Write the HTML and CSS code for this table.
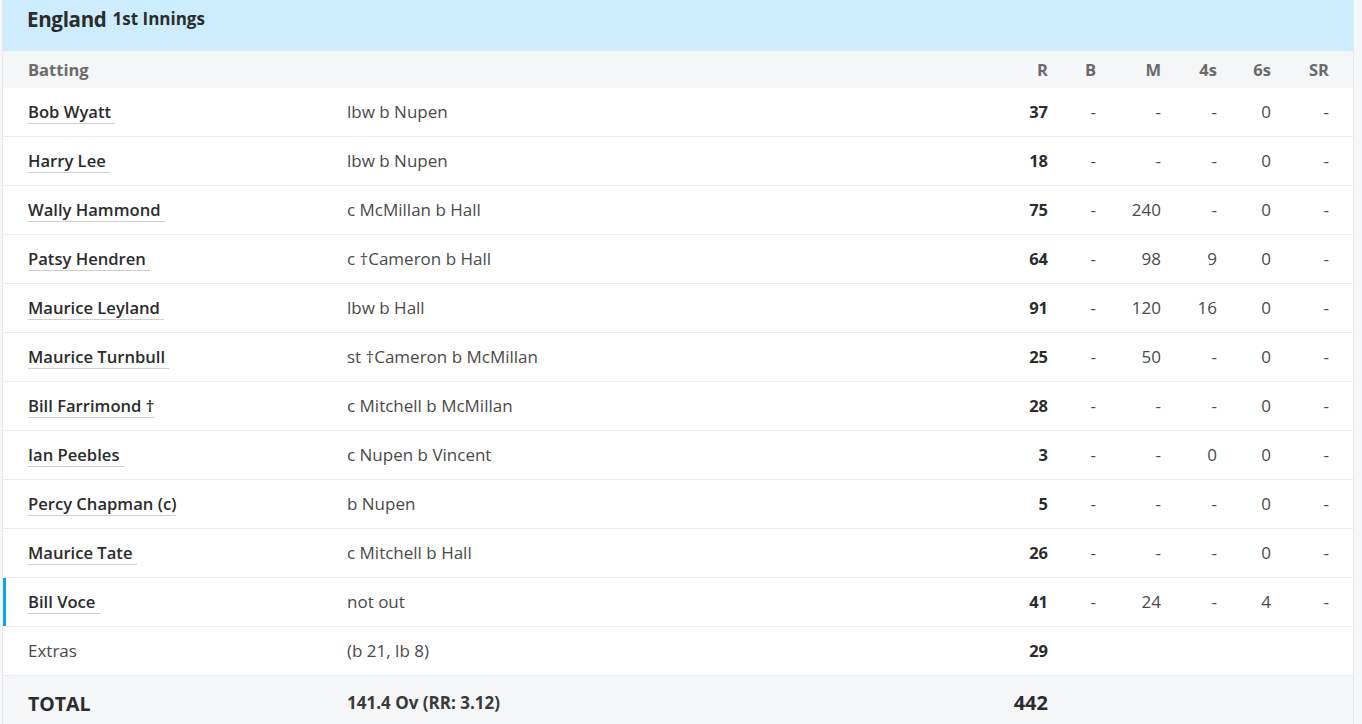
FILE: index.html
```html
<!DOCTYPE html>
<html>
<head>
<meta charset="utf-8">
<link rel="stylesheet" href="styles.css">
</head>
<body>
<div class="card">
  <div class="title"><span class="team">England</span> <span class="inn">1st Innings</span></div>
  <div class="row head">
    <div class="c-name">Batting</div>
    <div class="c-dis"></div>
    <div class="num">R</div><div class="num">B</div><div class="num">M</div><div class="num">4s</div><div class="num">6s</div><div class="num">SR</div>
  </div>
  <div class="row"><div class="c-name"><a class="pl">Bob Wyatt </a></div><div class="c-dis">lbw b Nupen</div><div class="num r">37</div><div class="num">-</div><div class="num">-</div><div class="num">-</div><div class="num">0</div><div class="num">-</div></div>
  <div class="row"><div class="c-name"><a class="pl">Harry Lee </a></div><div class="c-dis">lbw b Nupen</div><div class="num r">18</div><div class="num">-</div><div class="num">-</div><div class="num">-</div><div class="num">0</div><div class="num">-</div></div>
  <div class="row"><div class="c-name"><a class="pl">Wally Hammond </a></div><div class="c-dis">c McMillan b Hall</div><div class="num r">75</div><div class="num">-</div><div class="num">240</div><div class="num">-</div><div class="num">0</div><div class="num">-</div></div>
  <div class="row"><div class="c-name"><a class="pl">Patsy Hendren </a></div><div class="c-dis">c †Cameron b Hall</div><div class="num r">64</div><div class="num">-</div><div class="num">98</div><div class="num">9</div><div class="num">0</div><div class="num">-</div></div>
  <div class="row"><div class="c-name"><a class="pl">Maurice Leyland </a></div><div class="c-dis">lbw b Hall</div><div class="num r">91</div><div class="num">-</div><div class="num">120</div><div class="num">16</div><div class="num">0</div><div class="num">-</div></div>
  <div class="row"><div class="c-name"><a class="pl">Maurice Turnbull </a></div><div class="c-dis">st †Cameron b McMillan</div><div class="num r">25</div><div class="num">-</div><div class="num">50</div><div class="num">-</div><div class="num">0</div><div class="num">-</div></div>
  <div class="row"><div class="c-name"><a class="pl">Bill Farrimond †</a></div><div class="c-dis">c Mitchell b McMillan</div><div class="num r">28</div><div class="num">-</div><div class="num">-</div><div class="num">-</div><div class="num">0</div><div class="num">-</div></div>
  <div class="row"><div class="c-name"><a class="pl">Ian Peebles </a></div><div class="c-dis">c Nupen b Vincent</div><div class="num r">3</div><div class="num">-</div><div class="num">-</div><div class="num">0</div><div class="num">0</div><div class="num">-</div></div>
  <div class="row"><div class="c-name"><a class="pl">Percy Chapman (c)</a></div><div class="c-dis">b Nupen</div><div class="num r">5</div><div class="num">-</div><div class="num">-</div><div class="num">-</div><div class="num">0</div><div class="num">-</div></div>
  <div class="row"><div class="c-name"><a class="pl">Maurice Tate </a></div><div class="c-dis">c Mitchell b Hall</div><div class="num r">26</div><div class="num">-</div><div class="num">-</div><div class="num">-</div><div class="num">0</div><div class="num">-</div></div>
  <div class="row notout"><div class="c-name"><a class="pl">Bill Voce </a></div><div class="c-dis">not out</div><div class="num r">41</div><div class="num">-</div><div class="num">24</div><div class="num">-</div><div class="num">4</div><div class="num">-</div></div>
  <div class="row extras"><div class="c-name">Extras</div><div class="c-dis">(b 21, lb 8)</div><div class="num r">29</div><div class="num"></div><div class="num"></div><div class="num"></div><div class="num"></div><div class="num"></div></div>
  <div class="row total"><div class="c-name">TOTAL</div><div class="c-dis">141.4 Ov (RR: 3.12)</div><div class="num r">442</div><div class="num"></div><div class="num"></div><div class="num"></div><div class="num"></div><div class="num"></div></div>
</div>
</body>
</html>
```

FILE: styles.css
```css
html, body { margin: 0; padding: 0; }
body {
  background: #f6f7f9;
  font-family: "Open Sans", "Noto Sans", sans-serif;
  color: #2b2c2d;
  padding: 0 8px 0 2px;
}
.card {
  background: #fff;
  border-left: 1px solid #e8e8e8;
  border-right: 1px solid #e8e8e8;
  width: 1350px;
}
.title {
  background: #cdecfd;
  height: 51px;
  box-sizing: border-box;
  padding: 0 24px 14px;
  display: flex;
  align-items: center;
  gap: 6px;
}
.title .team { font-size: 20.5px; font-weight: 700; color: #2b2c2d; letter-spacing: -0.3px; }
.title .inn { font-size: 17px; font-weight: 700; color: #2b2c2d; }
.row {
  display: grid;
  grid-template-columns: 320px 1fr 60px 48px 65px 56px 54px 58px;
  align-items: center;
  height: 49px;
  box-sizing: border-box;
  padding: 0 24px 2px;
  border-bottom: 1px solid #ececec;
  font-size: 17px;
  color: #4a4a4a;
}
.row.head {
  height: 37px;
  padding-bottom: 0;
  font-size: 16.5px;
  background: #f5f6f8;
  border-bottom: none;
  color: #6a6a6a;
  font-weight: 700;
}
.c-name { padding-left: 1px; }
.num { text-align: right; }
.num.r { font-weight: 700; color: #2b2c2d; font-size: 16.5px; }
.pl {
  color: #2b2c2d;
  font-size: 16.6px;
  font-weight: 600;
  text-decoration: none;
  border-bottom: 1px solid #cfcfcf;
  white-space: pre;
}
.row.notout { box-shadow: inset 3px 0 0 #0ea5e9; }
.row.total {
  background: #f5f6f8;
  border-bottom: none;
  font-weight: 700;
  height: 60px;
  align-items: start;
  padding-top: 13px;
}
.row.total .c-name { font-size: 19.5px; font-weight: 700; color: #2b2c2d; margin-top: 1px; }
.row.total .c-dis { font-size: 17px; color: #3a3a3a; margin-top: 2px; }
.row.total .num.r { font-size: 20px; }
```
